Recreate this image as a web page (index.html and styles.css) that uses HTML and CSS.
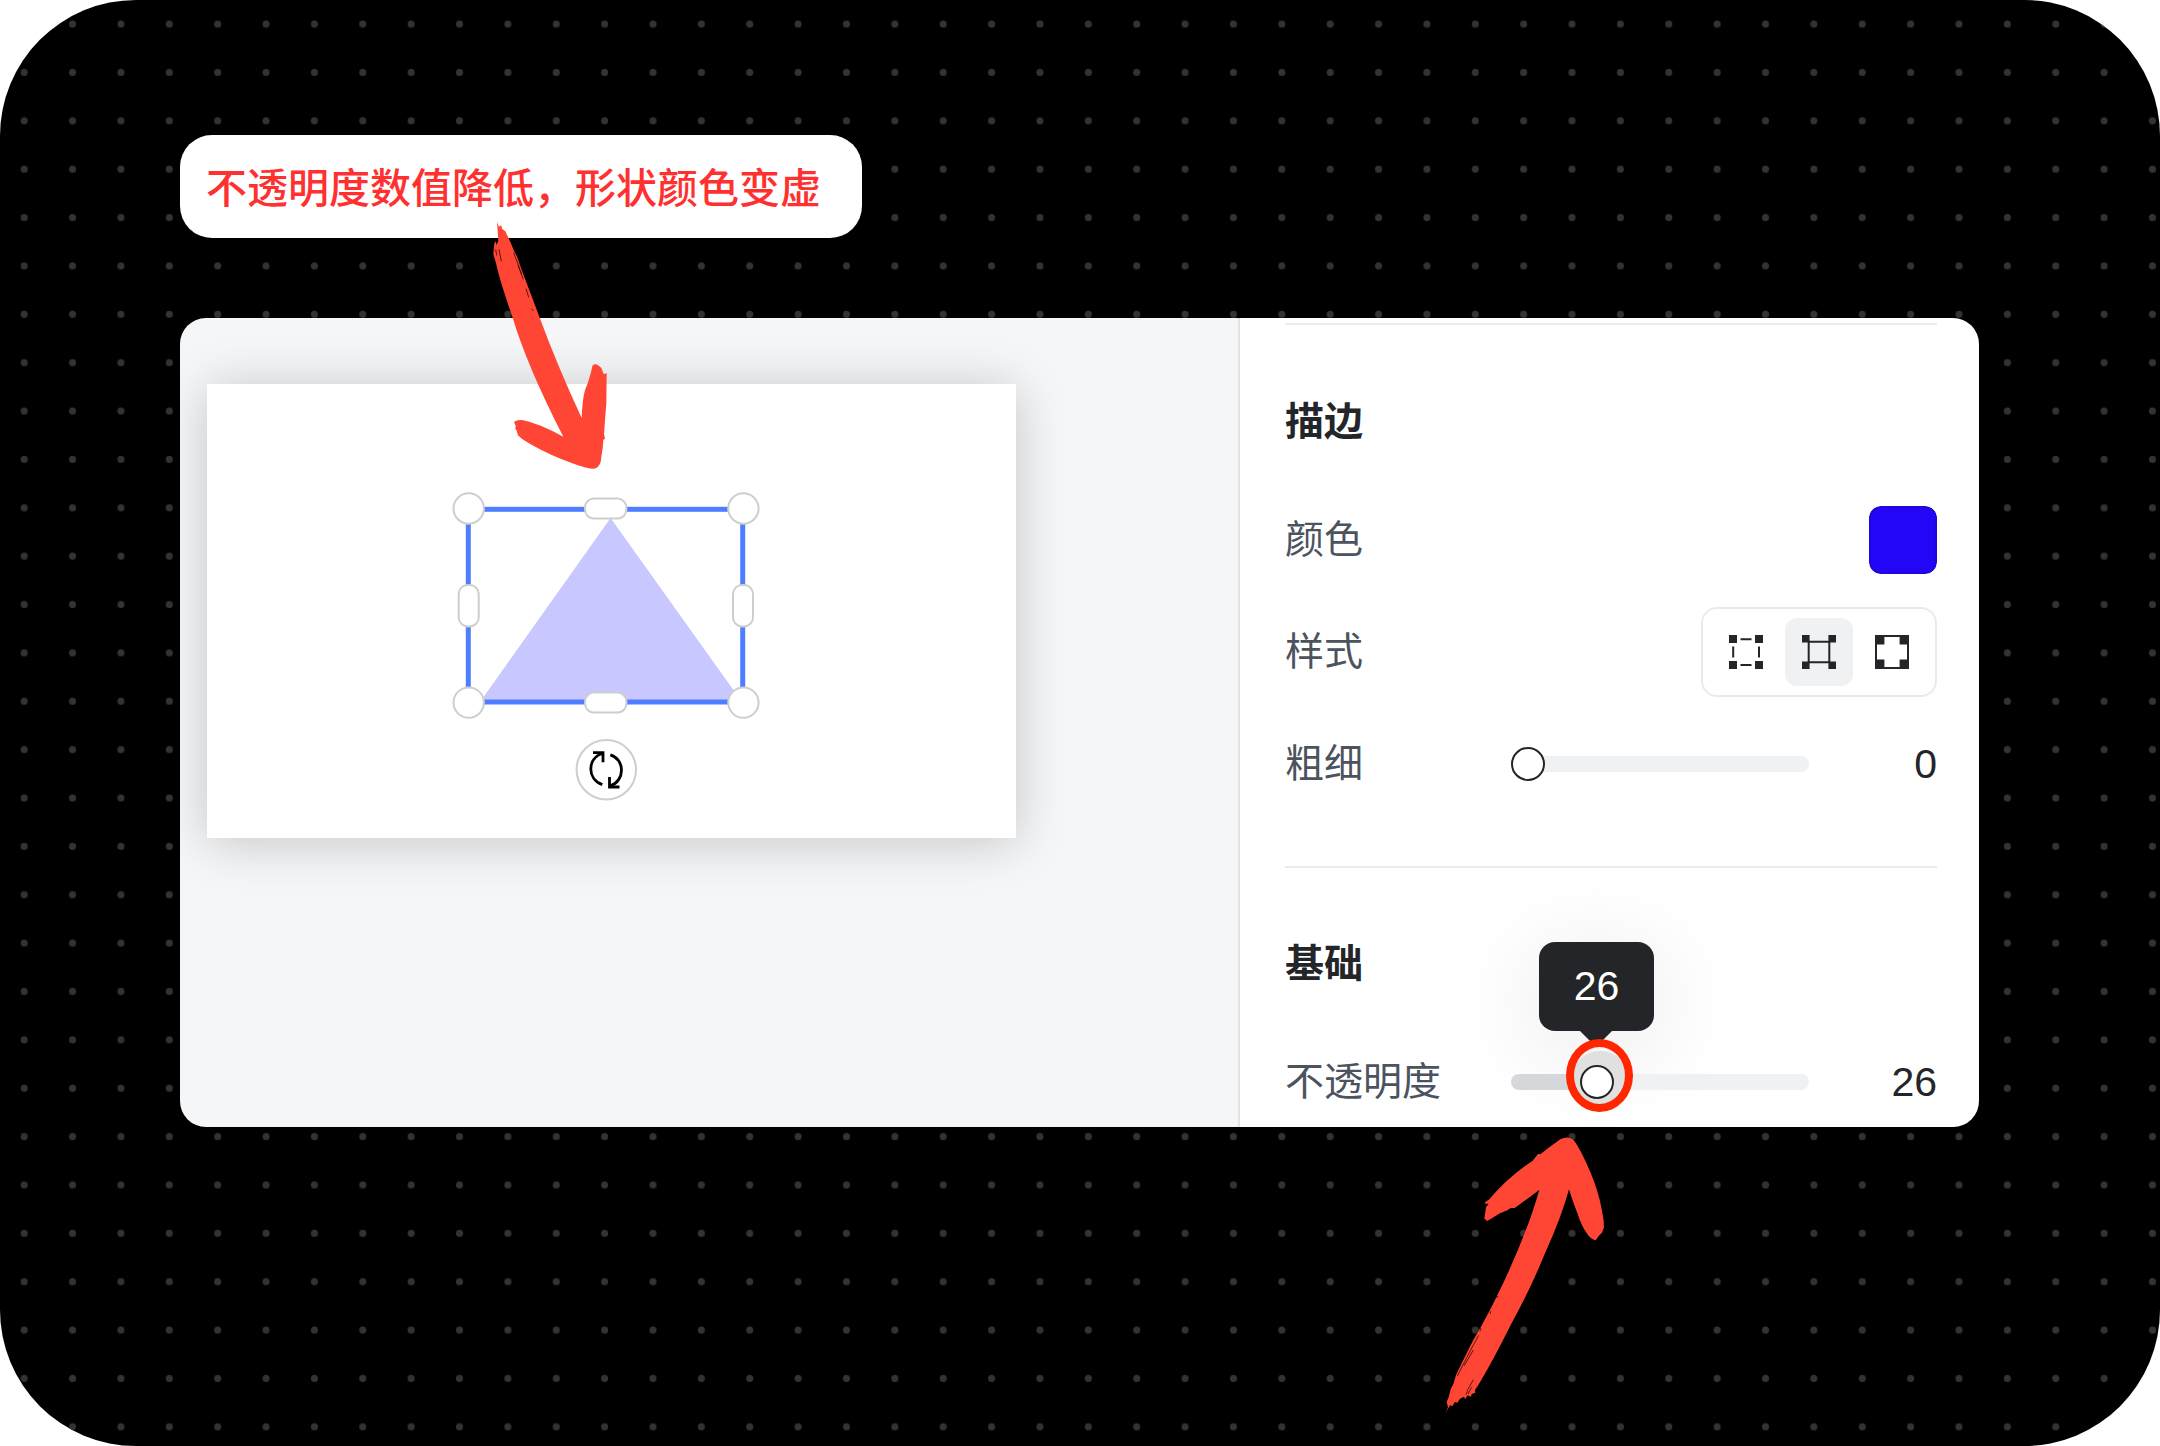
FILE: index.html
```html
<!DOCTYPE html>
<html lang="zh-CN">

<head>
    <meta charset="UTF-8">
    <meta name="viewport" content="width=device-width, initial-scale=1.0">
    <title>不透明度</title>
    <link rel="stylesheet" href="styles.css">
</head>

<body>
    <main class="stage">
        <!-- Dotted background -->
        <svg class="dots" width="100%" height="100%" aria-hidden="true">
            <defs>
                <pattern id="dot" width="48.37" height="48.37" patternUnits="userSpaceOnUse">
                    <circle cx="24.2" cy="24.1" r="3.5" fill="#333333" />
                </pattern>
            </defs>
            <rect width="100%" height="100%" fill="url(#dot)" />
        </svg>

        <div class="callout">
            不透明度数值降低，形状颜色变虚
            <svg class="arrow arrow-down" viewBox="0 0 660 840" aria-hidden="true">
                <path d="M171 36 L177 50 L184 46 L186 56 L196 64 L203 79 L212 98 L222 122 L232 142 L240 166 L252 198 L264 230 L280 272 L298 320 Q350 462 425 624 Q427 570 435 540 Q447 515 458 466 Q466 460 474 466 L484 474 L491 492 L500 490 L499 580 L495 630 L492 672 L495 686 L490 690 L488 715 L484 740 L482 756 Q474 778 458 776 Q436 775 395 759 Q330 735 280 707 Q248 691 234 676 L230 662 L226 656 L227 647 L222 636 Q232 628 250 631 Q295 640 370 680 Q262 470 217 320 Q180 215 168 160 L160 132 L163 100 L168 94 L169 106 L175 92 L173 62 Z" />
                <path class="bristle" d="M177 118 L184 154 M167 118 L170 136 M221 128 L245 192 M234 166 L250 208 M258 236 L266 262 M275 296 L280 303" />
            </svg>
        </div>

        <section class="editor">
            <div class="canvas">
                <div class="slide">
                    <svg class="selection" viewBox="0 0 330 330" aria-hidden="true">
                        <polygon points="170.6,38 302,222 40,222" fill="#c8c7ff" />
                        <rect x="28.3" y="29.3" width="274.4" height="192.7" fill="none" stroke="#4e7dff" stroke-width="5" />
                        <g fill="#ffffff" stroke="#cecece" stroke-width="2">
                            <circle cx="28.7" cy="28.5" r="15.2" />
                            <circle cx="303.4" cy="28.5" r="15.2" />
                            <circle cx="28.7" cy="222.6" r="15.2" />
                            <circle cx="303.4" cy="222.6" r="15.2" />
                            <rect x="145" y="18.6" width="41.4" height="20" rx="9" />
                            <rect x="145" y="212.6" width="41.4" height="20" rx="9" />
                            <rect x="18.7" y="105" width="20" height="41.4" rx="9" />
                            <rect x="293" y="105" width="20" height="41.4" rx="9" />
                            <circle cx="166.3" cy="289.7" r="29.7" />
                        </g>
                        <g fill="none" stroke="#000000" stroke-width="2.8">
                            <path d="M162.3 304.6 C147 299 147 279 162 273.5" />
                            <path d="M153 272.7 H163 V282.3" />
                            <path d="M170.3 274.8 C185 279 185.5 301 170 306" />
                            <path d="M179.5 307 H169.5 V297" />
                        </g>
                    </svg>
                </div>
            </div>

            <aside class="sidebar">
                <section class="group">
                    <h2>描边</h2>
                    <div class="row">
                        <label for="strokeColor">颜色</label>
                        <input type="color" id="strokeColor" class="swatch" value="#2206f5">
                    </div>
                    <div class="row">
                        <span id="styleLabel">样式</span>
                        <div class="styles" role="group" aria-labelledby="styleLabel">
                            <button type="button" aria-label="虚线">
                                <svg viewBox="0 0 34 34">
                                    <path d="M0 0h8v8H0zM26 0h8v8h-8zM0 26h8v8H0zM26 26h8v8h-8z" />
                                    <path class="line" d="M11.5 4.2h11M11.5 30h11M4.2 11.5v11M30 11.5v11" />
                                </svg>
                            </button>
                            <button type="button" class="active" aria-label="细线" aria-pressed="true">
                                <svg viewBox="0 0 34 34">
                                    <path d="M0 0h7.6v7.6H0zM26.4 0h7.6v7.6h-7.6zM0 26.4h7.6v7.6H0zM26.4 26.4h7.6v7.6h-7.6z" />
                                    <path class="line" d="M6.7 6.7h20.6v20.6H6.7z" />
                                </svg>
                            </button>
                            <button type="button" aria-label="粗线">
                                <svg viewBox="0 0 34 34">
                                    <path d="M0 0h9.4v9.4H0zM24.6 0h9.4v9.4h-9.4zM0 24.6h9.4v9.4H0zM24.6 24.6h9.4v9.4h-9.4z" />
                                    <path class="line" d="M1 1h32v32H1z" />
                                </svg>
                            </button>
                        </div>
                    </div>
                    <div class="row">
                        <label for="strokeWidth">粗细</label>
                        <div class="slider">
                            <input type="range" id="strokeWidth" min="0" max="100" value="0">
                        </div>
                        <output class="value" for="strokeWidth">0</output>
                    </div>
                </section>

                <section class="group">
                    <h2>基础</h2>
                    <div class="row">
                        <label for="opacity">不透明度</label>
                        <div class="slider">
                            <div class="tooltip">26</div>
                            <input type="range" id="opacity" min="0" max="100" value="26" style="--fill: 26%">
                            <span class="ring"></span>
                            <svg class="arrow arrow-up" viewBox="0 0 660 930" aria-hidden="true">
                                <path d="M77 878 L84 862 L80 846 L86 832 L92 808 L100 792 L108 765 L120 740 L140 700 L160 660 L182 622 L212 566 L235 520 Q320 345 358 209 Q325 235 284 264 L272 264 L262 271 L240 280 L202 303 L193 296 L198 262 L206 252 L192 250 L208 238 Q260 175 338 122 L354 102 L361 103 Q390 79 422 57 Q446 46 461 60 Q482 88 510 154 Q535 212 546 272 Q552 300 552 322 L546 338 L538 346 L527 361 Q512 358 502 342 Q485 320 473 282 Q460 250 447 208 Q425 290 375 400 Q330 510 272 615 Q220 720 175 795 L165 810 L166 818 L155 822 L153 830 L142 826 L136 838 L132 830 L120 836 L112 848 L104 846 L98 858 L90 856 Z" />
                                <path class="bristle" d="M160 779 L144 808 L138 824 M155 802 L144 822 M176 646 L152 690 L112 768 M160 690 L132 738 M183 624 L180 634 M212 574 L211 582 M233 528 L231 534" />
                            </svg>
                        </div>
                        <output class="value" for="opacity">26</output>
                    </div>
                </section>
            </aside>
        </section>
    </main>
</body>

</html>
```

FILE: styles.css
```css
* {
    box-sizing: border-box;
}

body {
    margin: 0;
    background-color: #ffffff;
    font-family: "Liberation Sans", "Noto Sans CJK SC", sans-serif;
}

.stage {
    position: relative;
    display: flex;
    flex-direction: column;
    gap: 80px;
    min-height: 100vh;
    padding: 135px 181px 135px 180px;
    background-color: #000000;
    border-radius: 136px;
    overflow: hidden;
}

.dots {
    position: absolute;
    inset: 0;
}

.callout {
    position: relative;
    z-index: 2;
    align-self: flex-start;
    padding: 19px 41px 22px 26px;
    background-color: #ffffff;
    border-radius: 32px;
    color: #ff3030;
    font-family: "Noto Sans CJK SC", sans-serif;
    font-size: 41px;
    font-weight: 500;
    line-height: 62px;
}

/* Brush arrows */
.arrow {
    position: absolute;
    fill: #ff4533;
    pointer-events: none;
}

.arrow-down {
    left: 260px;
    top: 75px;
    width: 220px;
    height: 280px;
}

.arrow-up {
    left: -91px;
    top: 55px;
    width: 220px;
    height: 310px;
}

.bristle {
    fill: none;
    stroke: #000000;
    stroke-width: 2;
}

.editor {
    position: relative;
    display: flex;
}

.canvas {
    flex: 1;
    padding: 66px 27px;
    background-color: #f5f6f8;
    border-radius: 26px 0 0 26px;
    overflow: hidden;
}

.slide {
    position: relative;
    width: 809px;
    height: 454px;
    background-color: #ffffff;
    box-shadow: 0 4px 48px rgba(0, 0, 0, 0.2);
}

.selection {
    position: absolute;
    left: 233px;
    top: 96px;
    width: 330px;
    height: 330px;
}

.sidebar {
    width: 741px;
    padding: 5px 42px 0 45px;
    background-color: #ffffff;
    border-left: 2px solid #e1e3e6;
    border-radius: 0 26px 26px 0;
}

.group {
    padding-top: 67px;
    padding-bottom: 57px;
    border-top: 2px solid #ebebec;
}

.group:last-child {
    padding-top: 66px;
    padding-bottom: 0;
}

h2 {
    margin: 0 0 43px;
    color: #242529;
    font-size: 39px;
    line-height: 60px;
}

.row {
    display: flex;
    align-items: center;
    justify-content: space-between;
    height: 90px;
    color: #4b535e;
    font-size: 39px;
    line-height: 60px;
}

.row + .row {
    margin-top: 22px;
}

.swatch {
    width: 68px;
    height: 68px;
    padding: 0;
    border: none;
    border-radius: 12px;
    background: none;
    overflow: hidden;
    cursor: pointer;
}

.swatch::-webkit-color-swatch-wrapper {
    padding: 0;
}

.swatch::-webkit-color-swatch {
    border: 2px solid #1f06dc;
    border-radius: 12px;
}

.styles {
    display: flex;
    gap: 5px;
    padding: 9px;
    border: 2px solid #e9eaec;
    border-radius: 16px;
}

.styles button {
    display: flex;
    align-items: center;
    justify-content: center;
    width: 68px;
    height: 68px;
    padding: 0;
    border: none;
    border-radius: 12px;
    background: none;
    cursor: pointer;
}

.styles button.active {
    background-color: #f0f1f3;
}

.styles svg {
    width: 34px;
    height: 34px;
    fill: #242529;
}

.styles .line {
    fill: none;
    stroke: #242529;
    stroke-width: 2;
}

.slider {
    position: relative;
    display: flex;
    align-items: center;
    width: 298px;
    height: 34px;
    margin-left: auto;
}

input[type="range"] {
    --fill: 0%;
    appearance: none;
    width: 100%;
    height: 16px;
    margin: 0;
    border-radius: 8px;
    background: linear-gradient(to right, #d6d7db var(--fill), #f0f1f3 var(--fill));
}

input[type="range"]::-webkit-slider-thumb {
    appearance: none;
    width: 34px;
    height: 34px;
    border: 2px solid #242529;
    border-radius: 50%;
    background-color: #ffffff;
    cursor: pointer;
}

#opacity {
    position: relative;
}

#opacity::-webkit-slider-thumb {
    box-shadow: 3px -1px 0 13px #dfe0df;
}

.value {
    width: 128px;
    color: #242529;
    font-size: 41px;
    text-align: right;
}

.tooltip {
    position: absolute;
    left: 28px;
    bottom: 68px;
    width: 115px;
    border-radius: 16px;
    background-color: #242529;
    box-shadow: 0 16px 100px rgba(0, 0, 0, 0.1);
    color: #ffffff;
    font-size: 41px;
    line-height: 89px;
    text-align: center;
}

.tooltip::after {
    content: "";
    position: absolute;
    left: 41px;
    top: 100%;
    border: 16px solid transparent;
    border-top-color: #242529;
}

/* Marker around the slider thumb */
.ring {
    position: absolute;
    left: 55px;
    top: -26px;
    width: 67px;
    height: 73px;
    border: 8px solid #ff2600;
    border-radius: 50%;
    pointer-events: none;
}
```
